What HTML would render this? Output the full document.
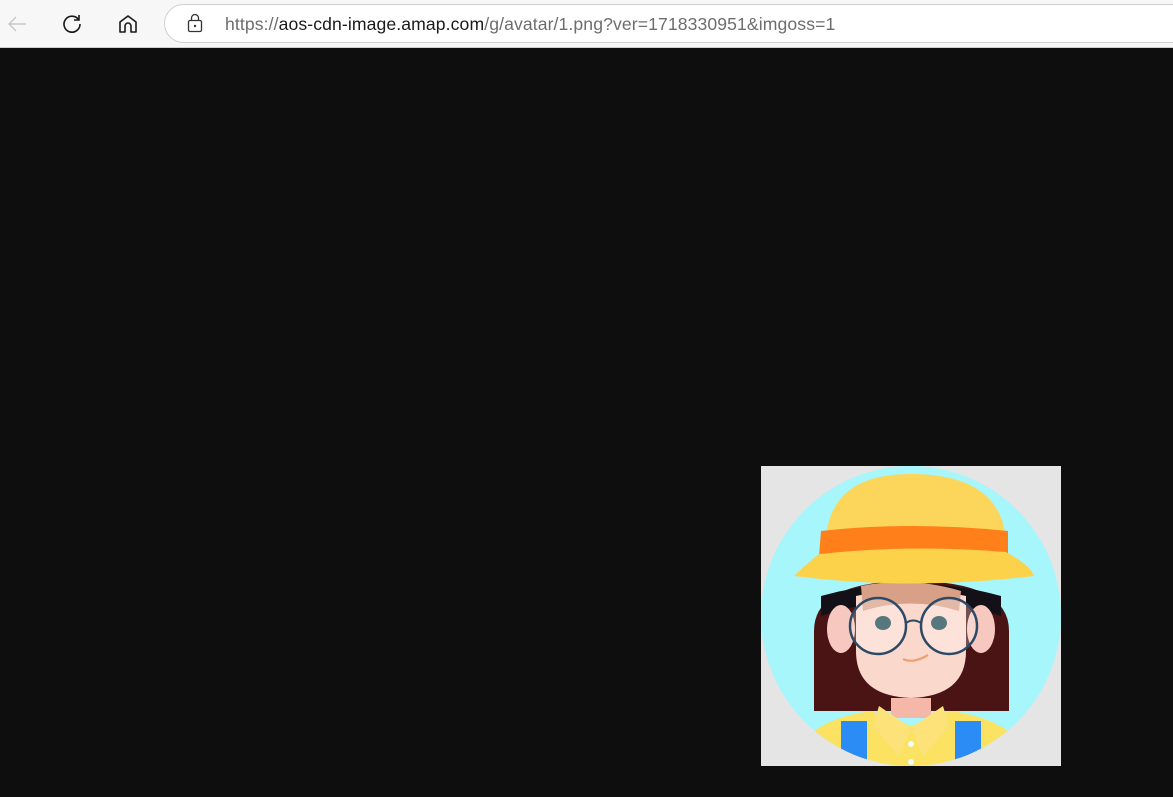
<!DOCTYPE html>
<html><head><meta charset="utf-8"><style>
html,body{margin:0;padding:0;width:1173px;height:797px;overflow:hidden;background:#0e0e0e;font-family:"Liberation Sans",sans-serif}
.bar{position:absolute;left:0;top:0;width:1173px;height:48px;background:#f7f7f7;border-bottom:1px solid #d0d0d0;box-sizing:border-box}
.url{position:absolute;left:164px;top:4px;width:1040px;height:39px;box-sizing:border-box;border:1px solid #cfcfcf;border-radius:20px;background:#fff}
.txt{position:absolute;left:225px;top:14px;font-size:17.6px;color:#6d6d6d;white-space:nowrap;letter-spacing:0.1px}
.txt b{font-weight:normal;color:#1a1a1a}
svg{position:absolute}
</style></head><body>
<div class="bar">
<svg style="left:6px;top:13px" width="24" height="22" viewBox="0 0 24 22"><path d="M20 11H3M10 4l-7 7 7 7" fill="none" stroke="#c8c8c8" stroke-width="1.4"/></svg>
<svg style="left:61px;top:13px" width="22" height="22" viewBox="0 0 22 22"><path d="M17.5 6.5A8 8 0 1 0 19 11" fill="none" stroke="#1a1a1a" stroke-width="1.6"/><path d="M18 2v5h-5" fill="none" stroke="#1a1a1a" stroke-width="1.6"/></svg>
<svg style="left:117px;top:13px" width="22" height="22" viewBox="0 0 22 22"><path d="M3 19V9l8-6 8 6v10h-5v-6a3 3 0 0 0-6 0v6z" fill="none" stroke="#1a1a1a" stroke-width="1.6" stroke-linejoin="round"/></svg>
<div class="url"></div>
<svg style="left:186px;top:12px" width="18" height="22" viewBox="0 0 18 22"><rect x="2.5" y="8.5" width="13" height="11" rx="1.5" fill="none" stroke="#333" stroke-width="1.3"/><path d="M5.5 8.5V6a3.5 3.5 0 0 1 7 0v2.5" fill="none" stroke="#333" stroke-width="1.3"/><circle cx="9" cy="14" r="1.2" fill="#333"/></svg>
<div class="txt">https://<b>aos-cdn-image.amap.com</b>/g/avatar/1.png?ver=1718330951&amp;imgoss=1</div>
</div>
<svg style="left:761px;top:466px" width="300" height="300" viewBox="0 0 300 300">
<defs><clipPath id="c"><circle cx="150" cy="150" r="150"/></clipPath></defs>
<rect width="300" height="300" fill="#e5e5e5"/>
<circle cx="150" cy="150" r="150" fill="#a6f6fb"/>
<g clip-path="url(#c)">
<path d="M53 245V165Q53 115 150 115Q248 115 248 165V245Z" fill="#4a1414"/>
<path d="M60 130Q150 105 240 130V150Q150 120 60 150Z" fill="#141018"/>
<ellipse cx="80" cy="163" rx="14" ry="24" fill="#f6c8c0"/>
<ellipse cx="220" cy="163" rx="14" ry="24" fill="#f6c8c0"/>
<path d="M95 130Q150 118 205 130V185Q205 230 150 232Q95 230 95 185Z" fill="#fbd8cc"/>
<path d="M100 120Q150 110 200 125L198 145Q150 130 102 145Z" fill="#d9a088"/>
<path d="M130 232h40v20h-40z" fill="#f5b8a8"/>
<path d="M30 300Q40 255 110 245L150 260L190 245Q260 255 270 300Z" fill="#fbe263"/>
<path d="M80 255h26v50h-26zM194 255h26v50h-26z" fill="#2b8cf5"/>
<path d="M118 240L150 262L138 290L112 260ZM182 240L150 262L162 290L188 260Z" fill="#fde27a"/>
<circle cx="150" cy="278" r="3" fill="#e9fff5"/>
<circle cx="150" cy="296" r="3" fill="#e9fff5"/>
<ellipse cx="122" cy="157" rx="8" ry="7" fill="#1f4a55"/>
<ellipse cx="178" cy="157" rx="8" ry="7" fill="#1f4a55"/>
<circle cx="117" cy="160" r="28" fill="rgba(255,255,255,0.25)" stroke="#2c4a66" stroke-width="2.5"/>
<circle cx="188" cy="160" r="28" fill="rgba(255,255,255,0.25)" stroke="#2c4a66" stroke-width="2.5"/>
<path d="M145 157q7-5 15 0" fill="none" stroke="#2c4a66" stroke-width="2"/>
<path d="M142 193q10 5 25-4" fill="none" stroke="#f0a070" stroke-width="2.2"/>
<path d="M65 75Q68 8 150 8Q240 8 245 75Z" fill="#fcd65a"/>
<path d="M60 65Q150 55 247 65L247 88Q150 80 58 90Z" fill="#ff7f1a"/>
<path d="M33 110Q60 85 60 88Q150 78 245 86Q270 100 273 110Q150 125 33 110Z" fill="#fcd24a"/>
</g>
</svg>
</body></html>
